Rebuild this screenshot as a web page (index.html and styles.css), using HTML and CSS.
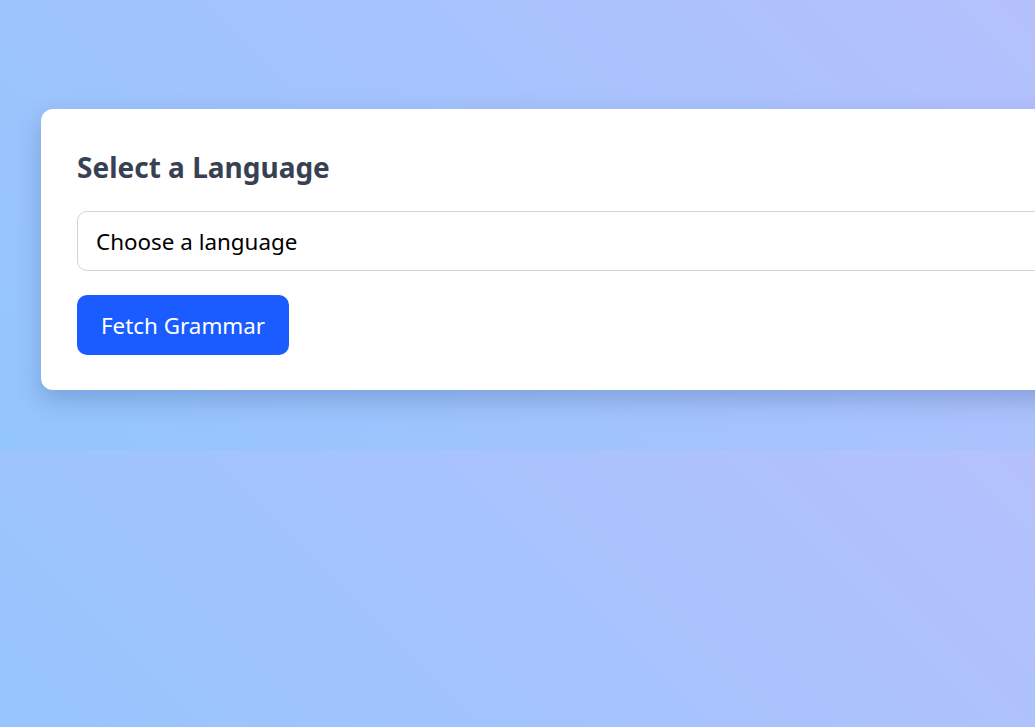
FILE: index.html
```html
<!DOCTYPE html>
<html lang="en">
<head>
<meta charset="utf-8">
<title>Select a Language</title>
<link rel="stylesheet" href="styles.css">
</head>
<body>
  <main class="card">
    <h2 class="card-title">Select a Language</h2>
    <select class="lang-select">
      <option>Choose a language</option>
    </select>
    <button class="fetch-btn" type="button">Fetch Grammar</button>
  </main>
</body>
</html>
```

FILE: styles.css
```css
html {
  margin: 0;
  background: linear-gradient(45deg, #93c5fd 0%, #b5c1fd 100%);
  background-size: 100% 450px;
  background-repeat: repeat;
}
body {
  margin: 0;
  padding: 109px 0 60px 41px;
  overflow-x: hidden;
  font-family: "Noto Sans", "Open Sans", sans-serif;
}
.card {
  box-sizing: border-box;
  width: 1100px;
  background: #ffffff;
  border-radius: 12px;
  padding: 38px 36px 35px;
  box-shadow: 0 10px 25px rgba(30, 64, 120, 0.25);
  display: flex;
  flex-direction: column;
  align-items: flex-start;
}
.card-title {
  margin: 0 0 24px;
  font-size: 28px;
  line-height: 40px;
  font-weight: 700;
  color: #374151;
}
.lang-select {
  box-sizing: border-box;
  width: 100%;
  height: 60px;
  padding: 0 18px;
  font-family: inherit;
  font-size: 22.4px;
  color: #000;
  background: #ffffff;
  border: 1px solid #d1d5db;
  border-radius: 10px;
  appearance: none;
  -webkit-appearance: none;
  margin: 0 0 24px;
}
.fetch-btn {
  height: 60px;
  padding: 0 24px;
  font-family: inherit;
  font-size: 22.4px;
  color: #ffffff;
  background: #1a5cff;
  border: none;
  border-radius: 10px;
  cursor: pointer;
}
```
